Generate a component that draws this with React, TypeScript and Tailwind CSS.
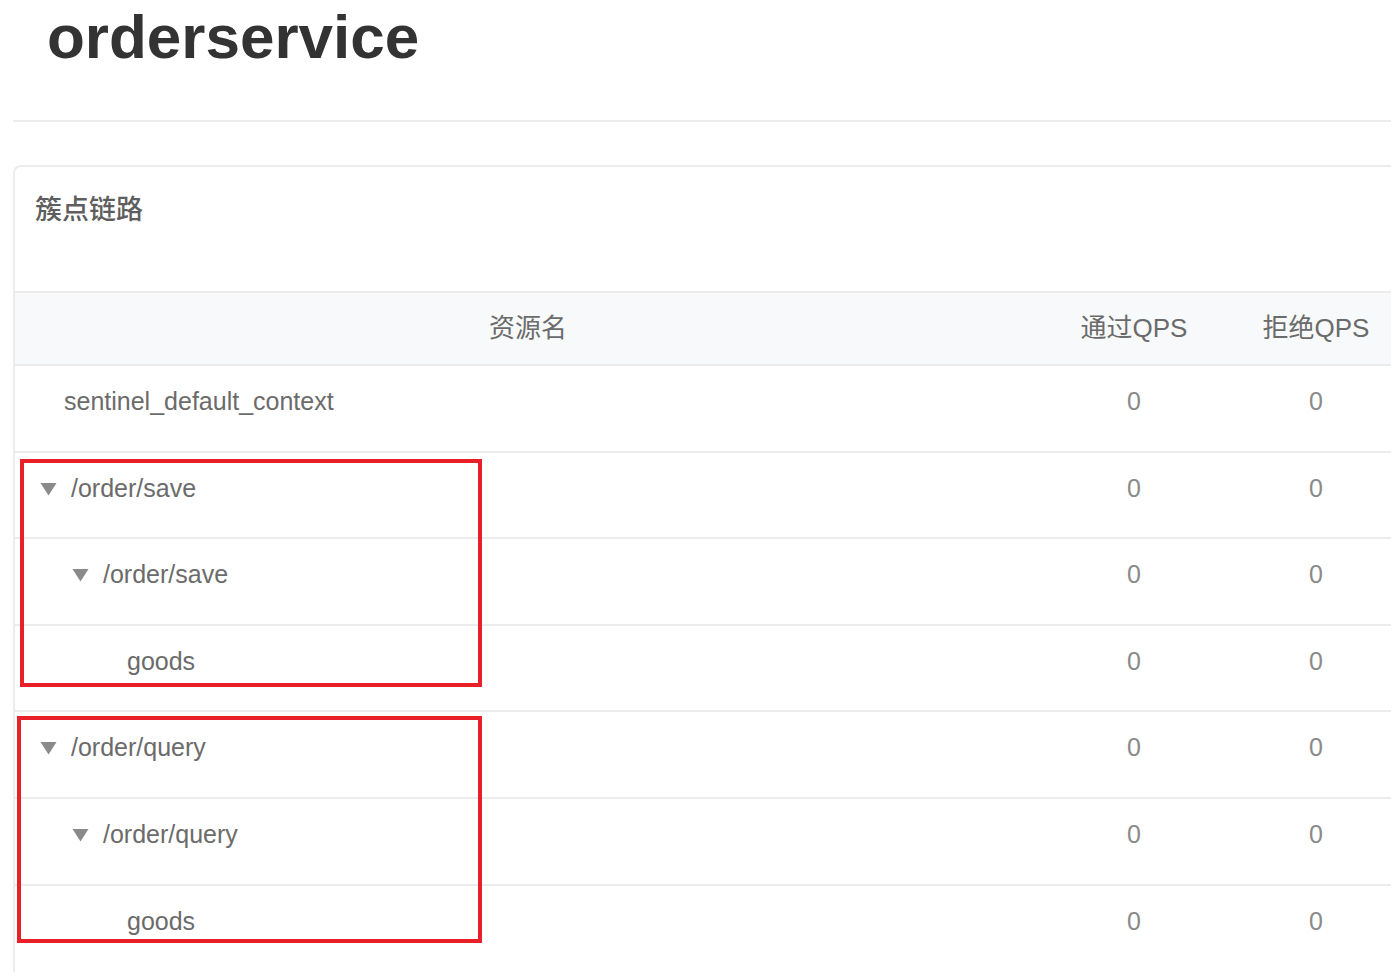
import React from "react";

interface Row {
  name: string;
  level: number;
  expandable: boolean;
  pass: number;
  block: number;
}

const rows: Row[] = [
  { name: "sentinel_default_context", level: 0, expandable: false, pass: 0, block: 0 },
  { name: "/order/save", level: 1, expandable: true, pass: 0, block: 0 },
  { name: "/order/save", level: 2, expandable: true, pass: 0, block: 0 },
  { name: "goods", level: 3, expandable: false, pass: 0, block: 0 },
  { name: "/order/query", level: 1, expandable: true, pass: 0, block: 0 },
  { name: "/order/query", level: 2, expandable: true, pass: 0, block: 0 },
  { name: "goods", level: 3, expandable: false, pass: 0, block: 0 },
];

const indent: Record<number, string> = {
  0: "pl-[49px]",
  1: "pl-[25px]",
  2: "pl-[57px]",
  3: "pl-[112px]",
};

const Caret = () => (
  <svg width="17" height="14" viewBox="0 0 17 14" className="shrink-0 mt-[2px]">
    <path d="M0.5 1 L16.5 1 L8.5 13.5 Z" fill="#8a8a8a" />
  </svg>
);

const TreeRow: React.FC<{ row: Row; last: boolean }> = ({ row, last }) => (
  <div
    className={`grid grid-cols-[1026px_186px_178px] h-[86.6px] text-[25px] leading-[30px] text-[#6b6b6b] ${
      last ? "" : "border-b-2 border-[#ececec]"
    }`}
  >
    <div className={`flex items-center gap-[14px] self-start pt-[20px] ${indent[row.level]}`}>
      {row.expandable && <Caret />}
      <span>{row.name}</span>
    </div>
    <div className="pt-[20px] text-center text-[#8a8a8a]">{row.pass}</div>
    <div className="pt-[20px] text-center text-[#8a8a8a]">{row.block}</div>
  </div>
);

export default function App() {
  return (
    <div className="w-[1397px] h-[978px] overflow-hidden bg-white font-['Liberation_Sans','Noto_Sans_CJK_SC',sans-serif]">
      <div className="pl-[13px] pr-[6px]">
        <div className="h-[122px] pl-[34px] border-b-2 border-[#ececec]">
          <h1 className="pt-[6px] text-[62px] leading-none font-bold text-[#333333]">orderservice</h1>
        </div>

        <div className="relative mt-[43px] border-l-2 border-t-2 border-[#ececec] rounded-tl-lg overflow-hidden">
          <div className="h-[124px] pl-[20px] pt-[21px]">
            <h3 className="text-[27px] leading-[40px] font-medium text-[#5e5e5e] font-['Noto_Sans_CJK_SC',sans-serif]">簇点链路</h3>
          </div>

          <div className="grid grid-cols-[1026px_186px_178px] h-[75px] items-center border-y-2 border-[#ececec] bg-[#f8f9fa] text-[26px] text-[#6b6b6b]">
            <div className="text-center">资源名</div>
            <div className="text-center">通过QPS</div>
            <div className="text-center">拒绝QPS</div>
          </div>

          {rows.map((row, i) => (
            <TreeRow key={i} row={row} last={i === rows.length - 1} />
          ))}

          <div className="absolute left-[5px] top-[292px] w-[462px] h-[228px] border-4 border-[#e8202a]"></div>
          <div className="absolute left-[2px] top-[549px] w-[465px] h-[227px] border-4 border-[#e8202a]"></div>
        </div>
      </div>
    </div>
  );
}
